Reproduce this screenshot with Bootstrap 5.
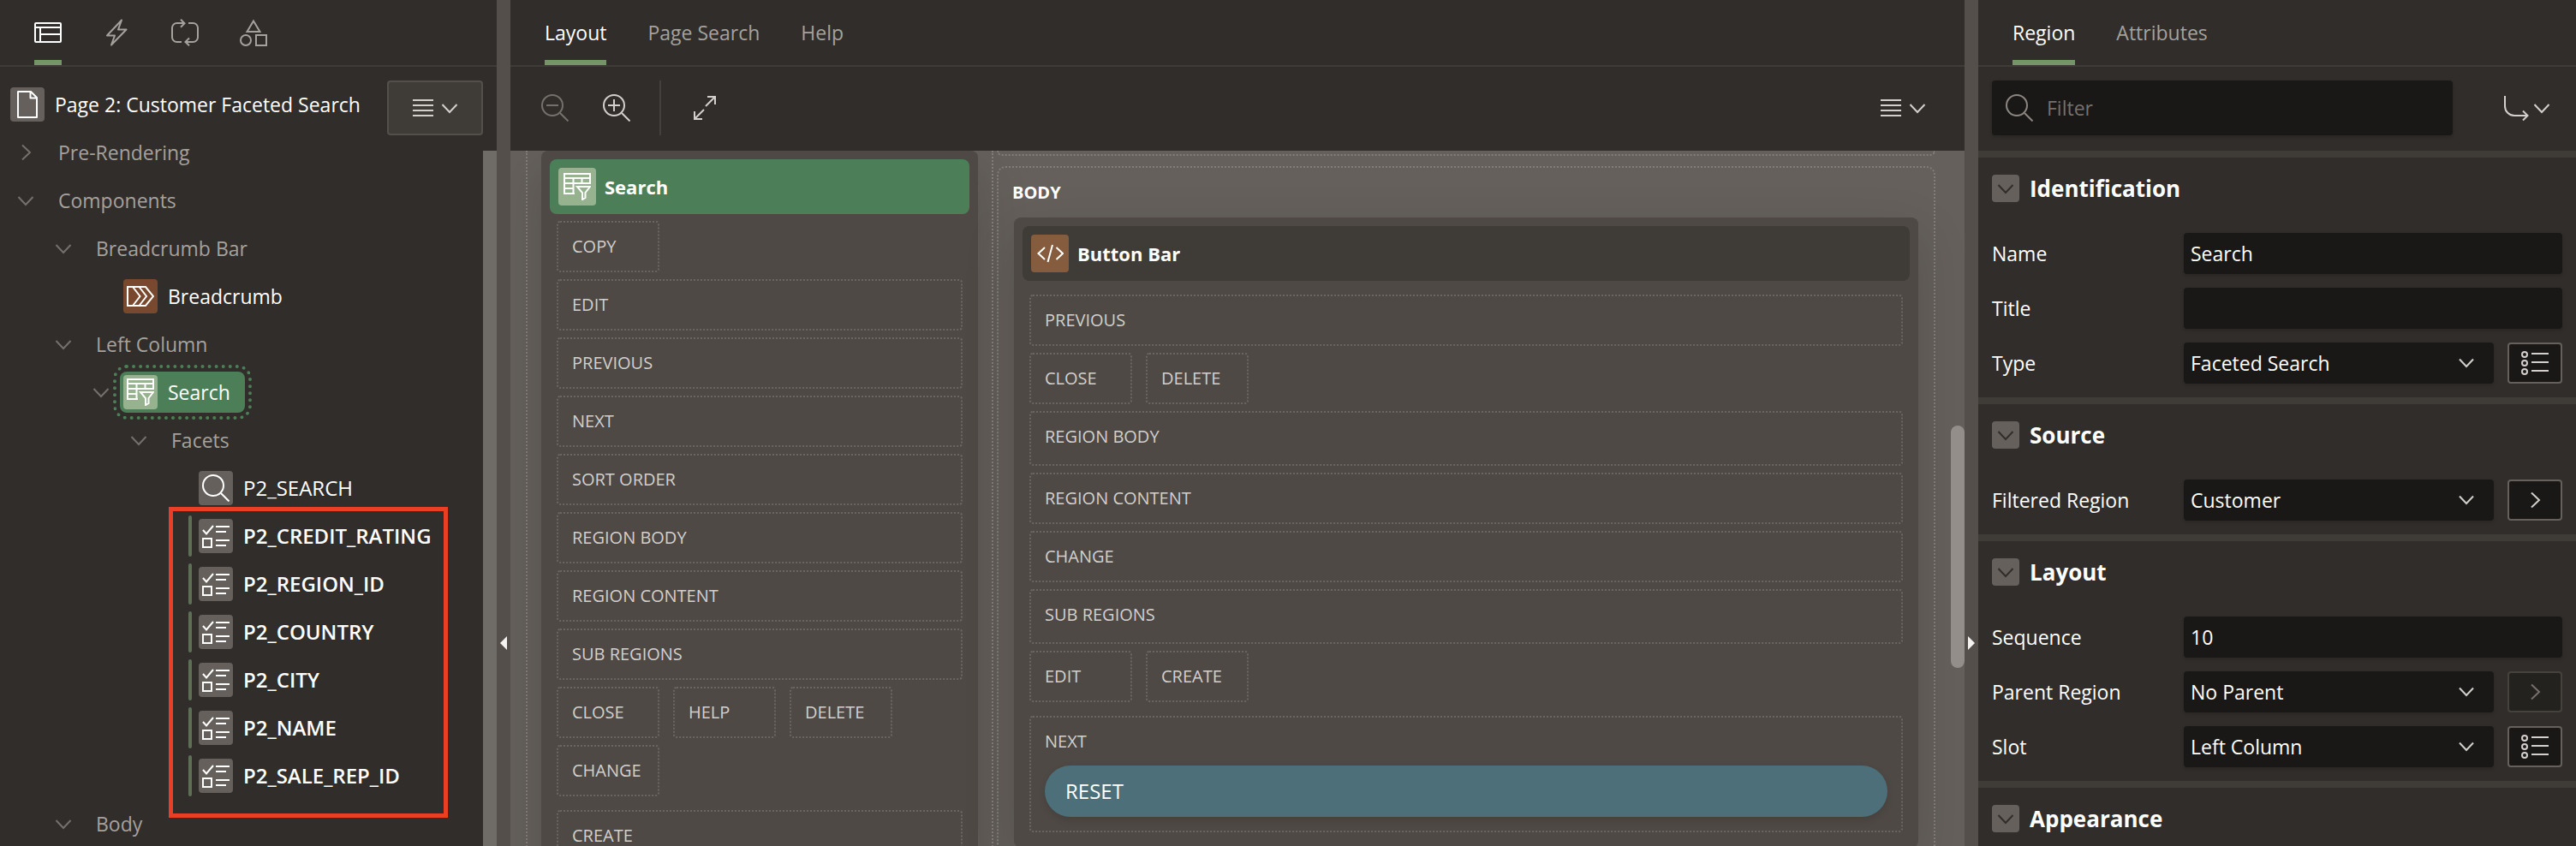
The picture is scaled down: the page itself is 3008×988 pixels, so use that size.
<!DOCTYPE html>
<html lang="en" data-bs-theme="dark">
<head>
<meta charset="utf-8">
<meta name="viewport" content="width=device-width, initial-scale=1">
<title>Page Designer</title>
<link rel="stylesheet" href="https://cdn.jsdelivr.net/npm/bootstrap@5.3.0/dist/css/bootstrap.min.css">
<style>
:root{--pd-bg:#312d2a;--pd-line:#3f3b36;--pd-split:#544f4a;--pd-muted:#a5a19d;--pd-soft:#d2cfcc;--pd-block:#4e4945;--pd-dots:#6b6662;--pd-field:#1a1816;--pd-accent:#759569;--pd-green:#4c7f58}
body{background:var(--pd-bg);color:#fff;font-family:"Open Sans","Noto Sans",sans-serif;font-size:23px;line-height:32px}
a{color:inherit;text-decoration:none}
button{color:var(--pd-soft)}
.ico{width:32px;height:32px;flex:none;fill:none;stroke:currentColor;stroke-width:2;display:block}
.chev{width:20px;height:20px;flex:none;fill:none;stroke:currentColor;stroke-width:2;display:block}
.lines{width:24px;height:24px;flex:none;fill:none;stroke:currentColor;stroke-width:2;display:block}

/* panels */
.side-left{flex:0 0 580px}
.side-right{flex:0 0 698px}
.splitter{flex:0 0 16px;background:var(--pd-split)}
.collapse-btn{top:76%;left:4px;width:8px;height:16px;margin-top:-8px;background:#f5f3f1;border:0;padding:0}
.collapse-btn.to-left{clip-path:polygon(100% 0,0 50%,100% 100%)}
.collapse-btn.to-right{clip-path:polygon(0 0,100% 50%,0 100%)}
.tabs{gap:48px;padding:0 40px;border-bottom:2px solid var(--pd-line)}
.tabs a{height:76px;display:flex;align-items:center;padding-top:6px;border-bottom:6px solid transparent;color:var(--pd-muted);font-weight:500}
.tabs a.active{color:#fff;border-color:var(--pd-accent)}
.bar{padding:16px 16px 18px}
.menu-btn{width:112px;height:64px;gap:9px;border:2px solid transparent;border-radius:4px;background:transparent;padding:0}
.menu-btn.boxed{background:var(--pd-line);border-color:var(--pd-split)}
.menu-btn.goto{gap:4px;padding-right:12px}
.tool-btn{width:64px;height:64px;background:transparent;border:0;padding:0 16px}
.tool-btn:disabled{color:#75706c}
.rule{width:2px;height:64px;background:#45403c;margin:0 20px 0 18px}

/* tree */
.tree-head{height:56px;padding:0 0 0 12px;margin-top:16px}
.icon-box{width:40px;height:40px;padding:4px;border-radius:4px;background:#65605c;flex:none}
.icon-box.tall{width:44px;height:44px;padding:6px}
.icon-box.rust{background:#78482f}
.icon-box.clay{background:#865c3e}
.icon-box.sage{background:#97b28f}
.branch{height:56px;color:var(--pd-muted);padding-left:20px;font-weight:500}
.branch.l1{padding-left:64px}
.branch.l2{padding-left:108px}
.branch.l3{padding-left:152px}
.branch.l4{padding-left:196px;font-size:24px}
.twist{width:20px;height:20px;padding:0;border:0;background:none;color:#75706c;flex:none}
.plain{margin-left:28px}
.node{height:48px;margin-left:12px;padding:0 17px 0 4px;gap:12px;color:#fff;border-radius:8px}
.node.selected{background:var(--pd-green);outline:4px dotted var(--pd-green);outline-offset:4px}
.changed .node{margin-left:4px;padding-left:0;font-weight:600}
.changed .node::before{content:"";width:4px;height:48px;border-radius:2px;background:#5d6f54;margin-right:-4px}
.changed::after{content:"";position:absolute;top:-6px;bottom:-21px;left:197px;right:57px;border:5px solid #ea3f25;pointer-events:none}
.tree-scroll{top:176px;bottom:0;right:0;width:16px;background:#6f6b67}

/* layout canvas */
.canvas{background:#65605b;padding:0 34px 0 18px}
.cols{display:grid;grid-template-columns:minmax(0,544fr) minmax(0,1102fr);height:1000px;width:100%}
.dots-l{border-left:2px dotted #827d78}
.zone{border:2px dotted #827d78;border-radius:10px}
.zone.above{height:6px;border-top:0;border-radius:0 0 8px 8px;margin-bottom:12px;flex:none}
.zone.main{height:900px;padding:0 18px}
.zone-title{height:58px;font-size:20px;font-weight:700;margin-left:-2px}
.block{background:var(--pd-block);border-radius:8px;padding:10px 10px 18px;box-shadow:0 20px 60px rgba(0,0,0,.16)}
.block-head{height:64px;padding:10px;border-radius:8px;background:var(--pd-line);gap:10px;font-weight:700;font-size:22px}
.block-head.selected{background:var(--pd-green)}
.slots{gap:8px;padding:8px 8px 0;font-size:20px;font-weight:500;color:var(--pd-soft)}
.slot-box{height:60px;border:2px dotted var(--pd-dots);border-radius:4px;padding:0 16px}
.slot-box.tall{height:64px;padding-bottom:4px}
.slot-box.small-box{width:120px}
.slot-label{height:56px}
.pill{height:60px;width:100%;border:0;border-radius:30px;background:#4c6f7a;color:#fff;font-weight:500;font-size:24px;padding:0 24px;text-align:left;box-shadow:0 4px 10px rgba(0,0,0,.12)}
.canvas-thumb{top:321px;right:0;width:16px;height:283px;border-radius:8px;background:#938e8a}

/* property editor */
.filter-box input,.prop input,.prop select{background-color:var(--pd-field);border:0;border-radius:4px;color:#fff;font-size:23px;line-height:32px;font-weight:500;box-shadow:0 2px 4px rgba(0,0,0,.18)}
.filter-box input{height:64px;padding:0 16px 0 64px}
.filter-box input::placeholder{color:#75706c;opacity:1}
.filter-box .ico{left:16px;top:16px;color:#8b8682}
.group{border-top:8px solid var(--pd-line);padding:20px 16px 16px}
.group h2{font-size:26px;line-height:32px;font-weight:700;margin:0 0 36px;gap:12px}
.fold{width:32px;height:32px;border:0;border-radius:4px;background:#65605c;color:var(--pd-bg);padding:6px;flex:none}
.prop+.prop{margin-top:16px}
.prop label{width:208px;flex:none;font-weight:500}
.prop input,.prop select{height:48px;padding:0 8px}
.prop select{background-image:url("data:image/svg+xml,%3Csvg xmlns='http://www.w3.org/2000/svg' viewBox='0 0 20 20'%3E%3Cpath d='M2 5.500l8 8.500 8-8.500' fill='none' stroke='%23d2cfcc' stroke-width='2'/%3E%3C/svg%3E");background-size:20px 20px;background-position:right 22px center}
.side-btn{width:64px;height:48px;flex:none;border:2px solid #65605c;border-radius:4px;background:var(--pd-field);padding:0}
.side-btn:disabled{background:#24221f;border-color:#45413d;color:#75706c}
</style>
</head>
<body class="vh-100 overflow-hidden">
<svg class="d-none" aria-hidden="true">
  <symbol id="i-layout" viewBox="0 0 32 32"><rect x="1" y="5" width="30" height="22" rx="1"/><path d="M1 10h30M7 10v17M7 18h24"/></symbol>
  <symbol id="i-bolt" viewBox="0 0 32 32"><path d="M22 1.500L5 19.500h9L10 30.500 27.500 12.500H18z" stroke-linejoin="round"/></symbol>
  <symbol id="i-sync" viewBox="0 0 32 32"><path d="M12 27H6.500A5.500 5.500 0 0 1 1 21.500V10.500A5.500 5.500 0 0 1 6.500 5H15M11 .8l4.500 4.400L11 9.800M20 5h5.500A5.500 5.500 0 0 1 31 10.500v11a5.500 5.500 0 0 1-5.500 5.500H17M21 22.500l-4.500 4.400L21 31.300"/></symbol>
  <symbol id="i-shapes" viewBox="0 0 32 32"><path d="M16 2.500l7.500 12.500h-15z"/><circle cx="7" cy="25" r="6"/><rect x="19" y="19" width="12" height="12"/></symbol>
  <symbol id="i-page" viewBox="0 0 32 32"><path d="M5 1h15l7 7v23H5zM19.500 1v7.500H27" stroke-linejoin="round"/></symbol>
  <symbol id="i-menu" viewBox="0 0 24 24"><path d="M0 3h24M0 9h24M0 15h24M0 21h24"/></symbol>
  <symbol id="i-down" viewBox="0 0 20 20"><path d="M1.500 6l8.500 9 8.500-9"/></symbol>
  <symbol id="i-right" viewBox="0 0 20 20"><path d="M6 1.500l9 8.500-9 8.500"/></symbol>
  <symbol id="i-crumb" viewBox="0 0 32 32"><path d="M1 5h21l9 11-9 11H1zM7 5l8.500 11L7 27M14.500 5L23 16l-8.500 11"/></symbol>
  <symbol id="i-facet" viewBox="0 0 32 32"><path d="M13 24H1V1h30v11H1M1 6h30M11.500 6v18M21.500 6v6M1 18h10.500M16 16h15l-5.500 7v6L22 31v-8z"/></symbol>
  <symbol id="i-find" viewBox="0 0 32 32"><circle cx="13" cy="13" r="12"/><path d="M22 22l9.500 9.500"/></symbol>
  <symbol id="i-minus" viewBox="0 0 32 32"><circle cx="13" cy="13" r="12"/><path d="M22 22l9.500 9.500M6 13h14"/></symbol>
  <symbol id="i-plus" viewBox="0 0 32 32"><circle cx="13" cy="13" r="12"/><path d="M22 22l9.500 9.500M6 13h14M13 6v14"/></symbol>
  <symbol id="i-check" viewBox="0 0 32 32"><path d="M1 9l4 4.500L13 4M16 5h16M16 11h12M1 19h10v10H1zM16 21h16M16 27h12"/></symbol>
  <symbol id="i-expand" viewBox="0 0 32 32"><path d="M18 3h9v9M27 3L16 14M3 20v9h9M3 29l11-11"/></symbol>
  <symbol id="i-code" viewBox="0 0 32 32"><path d="M10 9l-7.500 7L10 23M19 6l-5.500 20M23.500 9l7.500 7-7.500 7"/></symbol>
  <symbol id="i-list" viewBox="0 0 32 32"><circle cx="4" cy="6" r="3"/><circle cx="4" cy="16" r="3"/><circle cx="4" cy="26" r="3"/><path d="M12 5h20M12 15h20M12 25h20"/></symbol>
  <symbol id="i-goto" viewBox="0 0 32 32"><path d="M3 2v12a11 11 0 0 0 11 11h15M24 19.500l5.500 5.500-5.500 5.500"/></symbol>
</svg>

<div class="d-flex h-100">
  <!-- component tree -->
  <aside class="side-left position-relative overflow-hidden">
    <nav class="tabs d-flex" aria-label="Trees">
      <a class="active" href="#" aria-label="Rendering"><svg class="ico"><use href="#i-layout"/></svg></a>
      <a href="#" aria-label="Dynamic Actions"><svg class="ico"><use href="#i-bolt"/></svg></a>
      <a href="#" aria-label="Processing"><svg class="ico"><use href="#i-sync"/></svg></a>
      <a href="#" aria-label="Shared Components"><svg class="ico"><use href="#i-shapes"/></svg></a>
    </nav>
    <div class="tree-head d-flex align-items-start justify-content-between pe-3">
      <a href="#" class="d-flex align-items-center h-100 text-nowrap fw-semibold"><span class="icon-box me-2"><svg class="ico"><use href="#i-page"/></svg></span><span class="ms-1 fw-medium">Page 2: Customer Faceted Search</span></a>
      <button class="menu-btn boxed d-flex align-items-center justify-content-center" aria-label="Tree menu"><svg class="lines"><use href="#i-menu"/></svg><svg class="chev"><use href="#i-down"/></svg></button>
    </div>
    <ul class="list-unstyled m-0 pe-3">
      <li class="branch d-flex align-items-center"><button class="twist" aria-label="Expand"><svg class="chev"><use href="#i-right"/></svg></button><span class="plain">Pre-Rendering</span></li>
      <li class="branch d-flex align-items-center"><button class="twist" aria-label="Collapse"><svg class="chev"><use href="#i-down"/></svg></button><span class="plain">Components</span></li>
      <li class="branch l1 d-flex align-items-center"><button class="twist" aria-label="Collapse"><svg class="chev"><use href="#i-down"/></svg></button><span class="plain">Breadcrumb Bar</span></li>
      <li class="branch l2 d-flex align-items-center"><span class="twist"></span><a href="#" class="node d-flex align-items-center"><span class="icon-box rust"><svg class="ico"><use href="#i-crumb"/></svg></span>Breadcrumb</a></li>
      <li class="branch l1 d-flex align-items-center"><button class="twist" aria-label="Collapse"><svg class="chev"><use href="#i-down"/></svg></button><span class="plain">Left Column</span></li>
      <li class="branch l2 d-flex align-items-center"><button class="twist" aria-label="Collapse"><svg class="chev"><use href="#i-down"/></svg></button><a href="#" class="node selected d-flex align-items-center"><span class="icon-box sage"><svg class="ico"><use href="#i-facet"/></svg></span>Search</a></li>
      <li class="branch l3 d-flex align-items-center"><button class="twist" aria-label="Collapse"><svg class="chev"><use href="#i-down"/></svg></button><span class="plain">Facets</span></li>
      <li class="branch l4 d-flex align-items-center"><span class="twist"></span><a href="#" class="node d-flex align-items-center"><span class="icon-box"><svg class="ico"><use href="#i-find"/></svg></span>P2_SEARCH</a></li>
    </ul>
    <ul class="changed list-unstyled m-0 position-relative">
      <li class="branch l4 d-flex align-items-center"><span class="twist"></span><a href="#" class="node d-flex align-items-center"><span class="icon-box"><svg class="ico"><use href="#i-check"/></svg></span>P2_CREDIT_RATING</a></li>
      <li class="branch l4 d-flex align-items-center"><span class="twist"></span><a href="#" class="node d-flex align-items-center"><span class="icon-box"><svg class="ico"><use href="#i-check"/></svg></span>P2_REGION_ID</a></li>
      <li class="branch l4 d-flex align-items-center"><span class="twist"></span><a href="#" class="node d-flex align-items-center"><span class="icon-box"><svg class="ico"><use href="#i-check"/></svg></span>P2_COUNTRY</a></li>
      <li class="branch l4 d-flex align-items-center"><span class="twist"></span><a href="#" class="node d-flex align-items-center"><span class="icon-box"><svg class="ico"><use href="#i-check"/></svg></span>P2_CITY</a></li>
      <li class="branch l4 d-flex align-items-center"><span class="twist"></span><a href="#" class="node d-flex align-items-center"><span class="icon-box"><svg class="ico"><use href="#i-check"/></svg></span>P2_NAME</a></li>
      <li class="branch l4 d-flex align-items-center"><span class="twist"></span><a href="#" class="node d-flex align-items-center"><span class="icon-box"><svg class="ico"><use href="#i-check"/></svg></span>P2_SALE_REP_ID</a></li>
    </ul>
    <ul class="list-unstyled m-0">
      <li class="branch l1 d-flex align-items-center"><button class="twist" aria-label="Collapse"><svg class="chev"><use href="#i-down"/></svg></button><span class="plain">Body</span></li>
    </ul>
    <div class="tree-scroll position-absolute"></div>
  </aside>

  <div class="splitter position-relative"><button class="collapse-btn to-left position-absolute" aria-label="Collapse left panel"></button></div>

  <!-- page layout -->
  <main class="flex-fill d-flex flex-column overflow-hidden">
    <nav class="tabs d-flex flex-shrink-0" aria-label="Center">
      <a class="active" href="#">Layout</a><a href="#">Page Search</a><a href="#">Help</a>
    </nav>
    <div class="bar d-flex align-items-center flex-shrink-0">
      <div class="d-flex align-items-center gap-2 ms-1">
        <button class="tool-btn" disabled aria-label="Zoom out"><svg class="ico"><use href="#i-minus"/></svg></button>
        <button class="tool-btn" aria-label="Zoom in"><svg class="ico"><use href="#i-plus"/></svg></button>
      </div>
      <span class="rule"></span>
      <button class="tool-btn" aria-label="Expand"><svg class="ico"><use href="#i-expand"/></svg></button>
      <button class="menu-btn d-flex align-items-center justify-content-center ms-auto" aria-label="Layout menu"><svg class="lines"><use href="#i-menu"/></svg><svg class="chev"><use href="#i-down"/></svg></button>
    </div>
    <div class="canvas flex-fill overflow-hidden position-relative">
      <div class="cols">
        <div class="dots-l px-3">
          <section class="block h-100">
            <div class="block-head selected d-flex align-items-center"><span class="icon-box tall sage"><svg class="ico"><use href="#i-facet"/></svg></span>Search</div>
            <div class="slots d-flex flex-column">
              <div class="slot-box small-box d-flex align-items-center">COPY</div>
              <div class="slot-box d-flex align-items-center">EDIT</div>
              <div class="slot-box d-flex align-items-center">PREVIOUS</div>
              <div class="slot-box d-flex align-items-center">NEXT</div>
              <div class="slot-box d-flex align-items-center">SORT ORDER</div>
              <div class="slot-box d-flex align-items-center">REGION BODY</div>
              <div class="slot-box d-flex align-items-center">REGION CONTENT</div>
              <div class="slot-box d-flex align-items-center">SUB REGIONS</div>
              <div class="d-flex gap-3">
                <div class="slot-box small-box d-flex align-items-center">CLOSE</div>
                <div class="slot-box small-box d-flex align-items-center">HELP</div>
                <div class="slot-box small-box d-flex align-items-center">DELETE</div>
              </div>
              <div class="slot-box small-box d-flex align-items-center">CHANGE</div>
              <div class="slot-box d-flex align-items-center mt-2">CREATE</div>
            </div>
          </section>
        </div>
        <div class="dots-l ps-1">
          <div class="zone above"></div>
          <div class="zone main">
            <div class="zone-title d-flex align-items-center">BODY</div>
            <section class="block">
              <div class="block-head d-flex align-items-center"><span class="icon-box tall clay"><svg class="ico"><use href="#i-code"/></svg></span>Button Bar</div>
              <div class="slots d-flex flex-column pt-3">
                <div class="slot-box d-flex align-items-center">PREVIOUS</div>
                <div class="d-flex gap-3">
                  <div class="slot-box small-box d-flex align-items-center">CLOSE</div>
                  <div class="slot-box small-box d-flex align-items-center">DELETE</div>
                </div>
                <div class="slot-box tall d-flex align-items-center">REGION BODY</div>
                <div class="slot-box d-flex align-items-center">REGION CONTENT</div>
                <div class="slot-box d-flex align-items-center">CHANGE</div>
                <div class="slot-box tall d-flex align-items-center">SUB REGIONS</div>
                <div class="d-flex gap-3">
                  <div class="slot-box small-box d-flex align-items-center">EDIT</div>
                  <div class="slot-box small-box d-flex align-items-center">CREATE</div>
                </div>
                <div class="slot-box h-auto pb-3 mt-2">
                  <div class="slot-label d-flex align-items-center">NEXT</div>
                  <button class="pill">RESET</button>
                </div>
              </div>
            </section>
          </div>
        </div>
      </div>
      <div class="canvas-thumb position-absolute"></div>
    </div>
  </main>

  <div class="splitter position-relative"><button class="collapse-btn to-right position-absolute" aria-label="Collapse right panel"></button></div>

  <!-- property editor -->
  <aside class="side-right overflow-hidden">
    <nav class="tabs d-flex" aria-label="Properties">
      <a class="active" href="#">Region</a><a href="#">Attributes</a>
    </nav>
    <div class="bar d-flex gap-3">
      <div class="filter-box flex-fill position-relative">
        <svg class="ico position-absolute"><use href="#i-find"/></svg>
        <input class="w-100" type="text" placeholder="Filter" aria-label="Filter">
      </div>
      <button class="menu-btn goto d-flex align-items-center justify-content-end" aria-label="Go to group"><svg class="ico"><use href="#i-goto"/></svg><svg class="chev"><use href="#i-down"/></svg></button>
    </div>
    <section class="group">
      <h2 class="d-flex align-items-center"><button class="fold" aria-label="Collapse"><svg class="chev"><use href="#i-down"/></svg></button>Identification</h2>
      <div class="prop d-flex align-items-center gap-3"><label for="p-name">Name</label><input id="p-name" class="flex-fill" type="text" value="Search"></div>
      <div class="prop d-flex align-items-center gap-3"><label for="p-title">Title</label><input id="p-title" class="flex-fill" type="text"></div>
      <div class="prop d-flex align-items-center gap-3"><label for="p-type">Type</label><select id="p-type" class="form-select flex-fill w-auto"><option>Faceted Search</option></select><button class="side-btn" aria-label="Pick type"><svg class="ico mx-auto"><use href="#i-list"/></svg></button></div>
    </section>
    <section class="group">
      <h2 class="d-flex align-items-center"><button class="fold" aria-label="Collapse"><svg class="chev"><use href="#i-down"/></svg></button>Source</h2>
      <div class="prop d-flex align-items-center gap-3"><label for="p-filtered">Filtered Region</label><select id="p-filtered" class="form-select flex-fill w-auto"><option>Customer</option></select><button class="side-btn" aria-label="Go to region"><svg class="chev mx-auto"><use href="#i-right"/></svg></button></div>
    </section>
    <section class="group">
      <h2 class="d-flex align-items-center"><button class="fold" aria-label="Collapse"><svg class="chev"><use href="#i-down"/></svg></button>Layout</h2>
      <div class="prop d-flex align-items-center gap-3"><label for="p-seq">Sequence</label><input id="p-seq" class="flex-fill" type="text" value="10"></div>
      <div class="prop d-flex align-items-center gap-3"><label for="p-parent">Parent Region</label><select id="p-parent" class="form-select flex-fill w-auto"><option>No Parent</option></select><button class="side-btn" disabled aria-label="Go to parent"><svg class="chev mx-auto"><use href="#i-right"/></svg></button></div>
      <div class="prop d-flex align-items-center gap-3"><label for="p-slot">Slot</label><select id="p-slot" class="form-select flex-fill w-auto"><option>Left Column</option></select><button class="side-btn" aria-label="Pick slot"><svg class="ico mx-auto"><use href="#i-list"/></svg></button></div>
    </section>
    <section class="group">
      <h2 class="d-flex align-items-center m-0"><button class="fold" aria-label="Collapse"><svg class="chev"><use href="#i-down"/></svg></button>Appearance</h2>
    </section>
  </aside>
</div>
<script src="https://cdn.jsdelivr.net/npm/bootstrap@5.3.0/dist/js/bootstrap.bundle.min.js"></script>
</body>
</html>
